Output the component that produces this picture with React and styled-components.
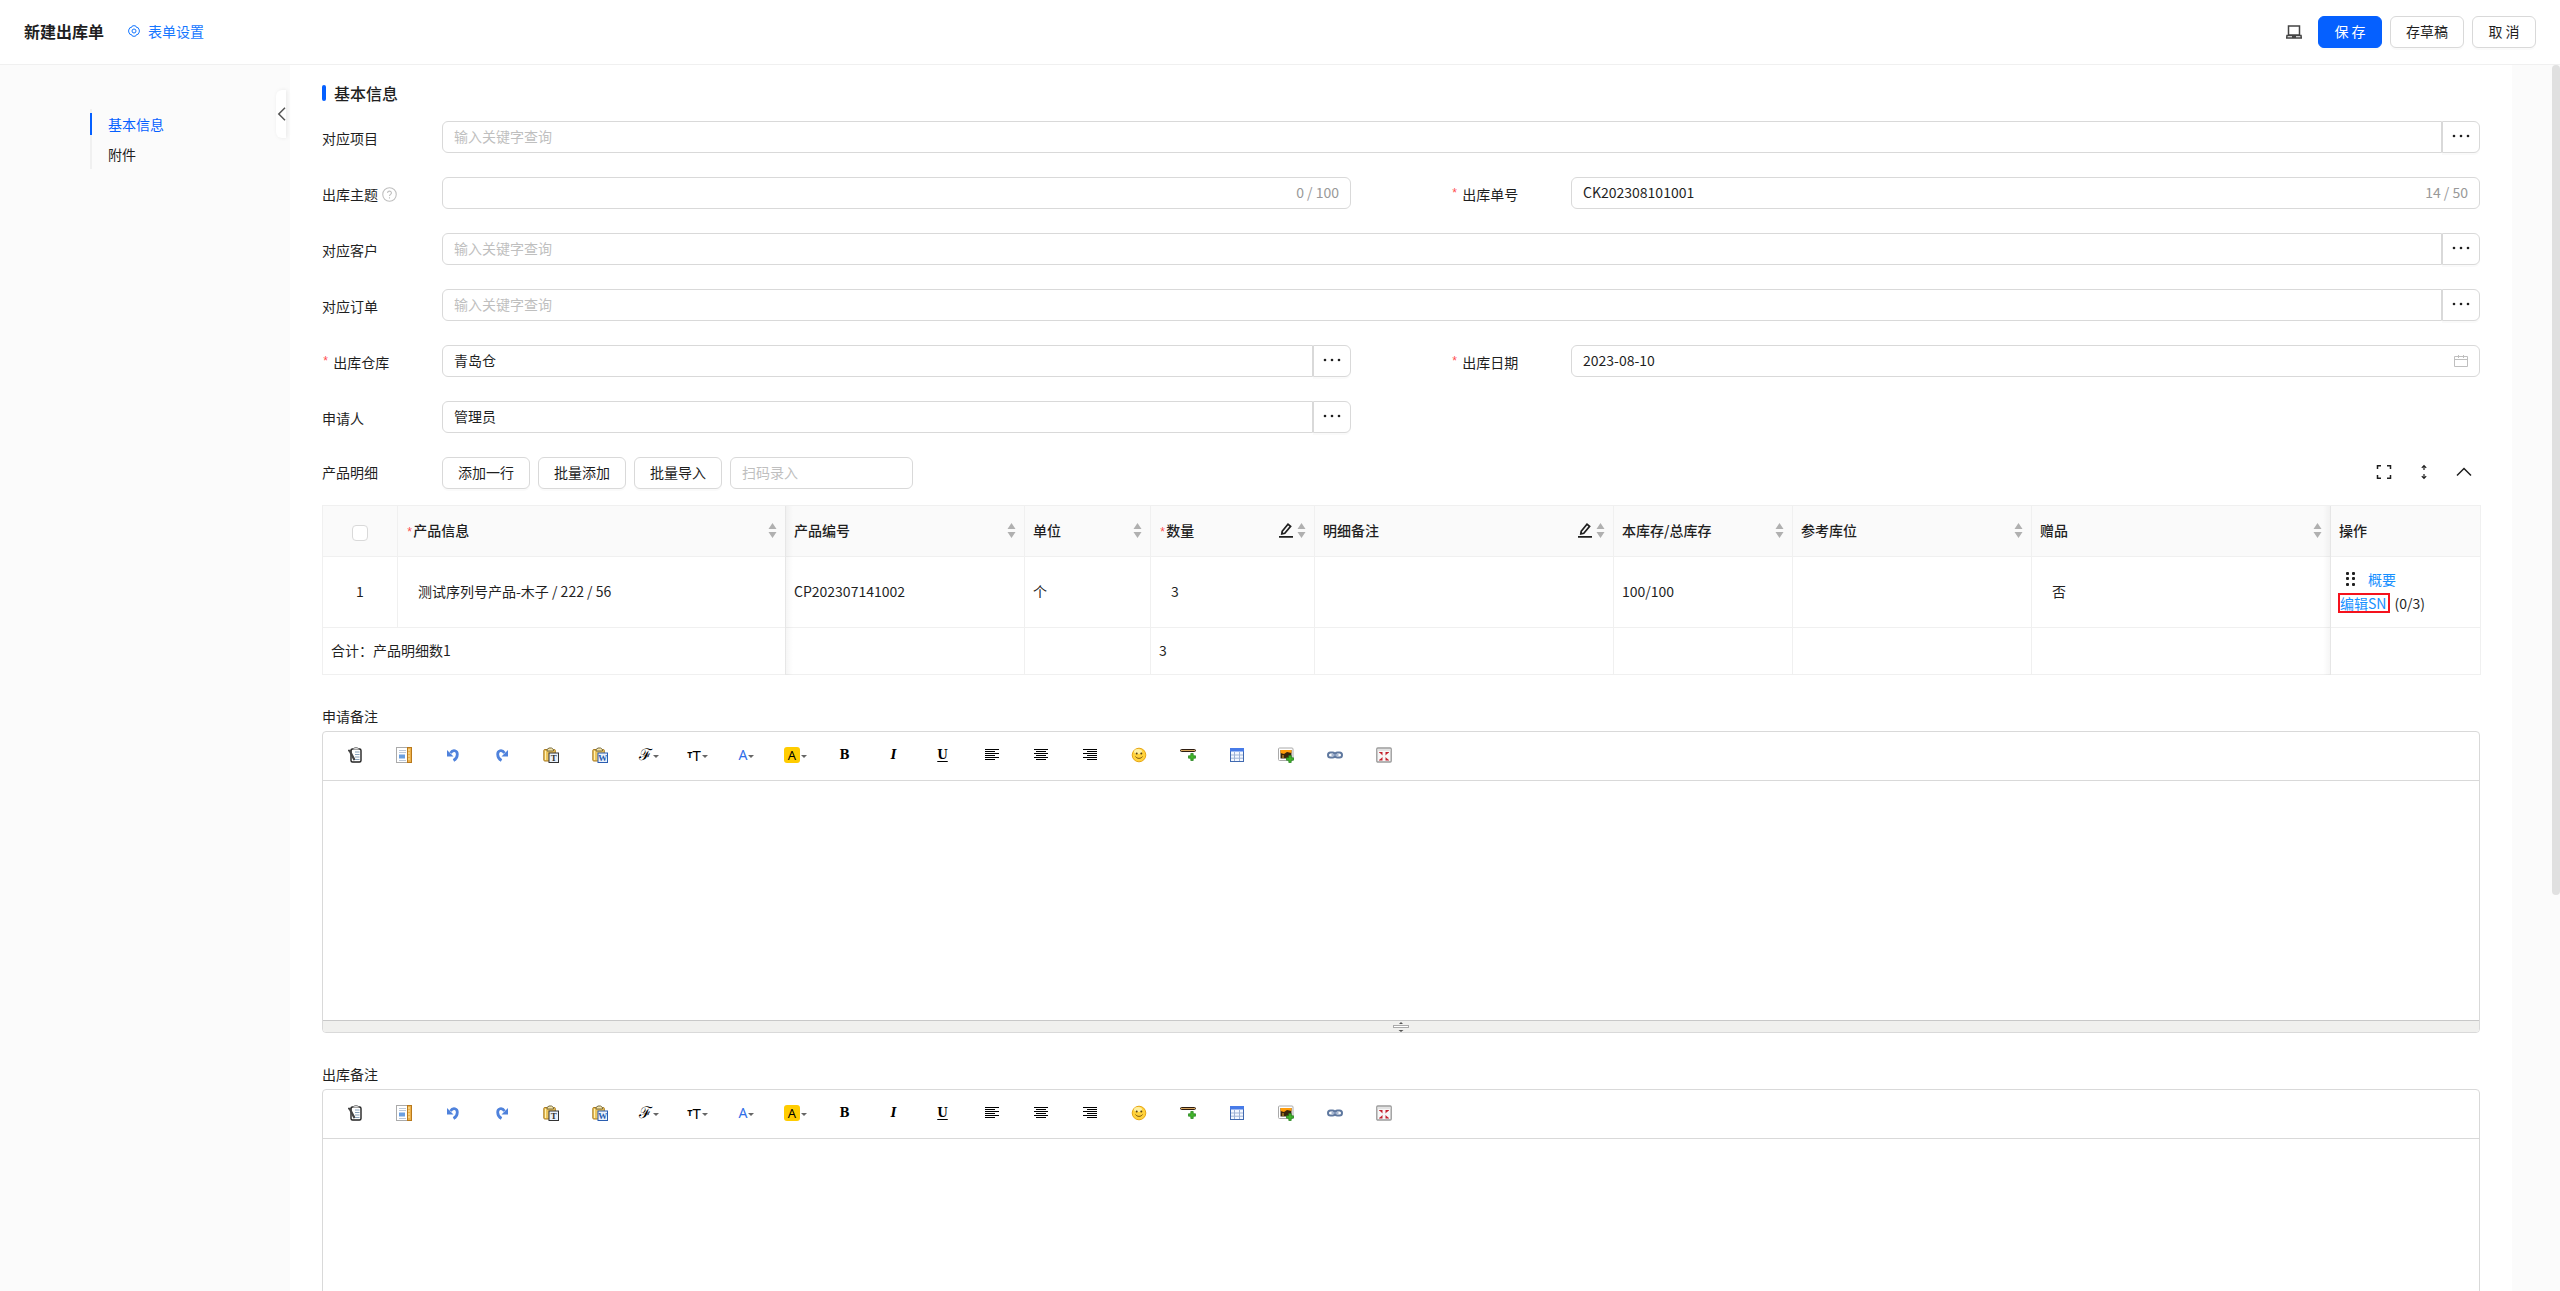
import React, { useState } from "react";
import styled, { createGlobalStyle, css } from "styled-components";

const Global = createGlobalStyle`
  *, *::before, *::after { box-sizing: border-box; }
  body { margin: 0; background: #fff; }
  body, button, input, textarea {
    font-family: "Noto Sans CJK SC", "Noto Sans", sans-serif;
    font-size: 14px;
    color: #1f1f1f;
  }
  a { text-decoration: none; }
`;

const Page = styled.div`
  display: flex;
  flex-direction: column;
  height: 100vh;
  overflow: hidden;
`;

/* ---------- header ---------- */
const Header = styled.header`
  flex: none;
  display: flex;
  align-items: center;
  justify-content: space-between;
  height: 65px;
  padding: 0 24px 2px;
  border-bottom: 1px solid #f0f0f0;
  background: #fff;
`;
const HeaderGroup = styled.div`
  display: flex;
  align-items: center;
  gap: ${(p) => p.$gap}px;
`;
const HeaderActions = styled(HeaderGroup)`
  padding-top: 2px;
`;
const PageTitle = styled.h1`
  margin: 0;
  font-size: 16px;
  line-height: 24px;
  font-weight: 700;
`;
const SettingsLink = styled.a`
  display: flex;
  align-items: center;
  gap: 8px;
  line-height: 22px;
  color: #1677ff;
`;
const IconButton = styled.button`
  display: flex;
  align-items: center;
  justify-content: center;
  padding: 0;
  width: 16px;
  height: 16px;
  border: 0;
  background: none;
  cursor: pointer;
`;
const Button = styled.button`
  height: 32px;
  min-width: ${(p) => p.$width}px;
  padding: 0 10px 2px;
  line-height: 22px;
  border: 1px solid ${(p) => (p.$primary ? "#0560ff" : "#d9d9d9")};
  border-radius: 6px;
  background: ${(p) => (p.$primary ? "#0560ff" : "#fff")};
  color: ${(p) => (p.$primary ? "#fff" : "#1f1f1f")};
  box-shadow: 0 2px 0 rgba(0, 0, 0, 0.02);
  white-space: nowrap;
  cursor: pointer;
`;

/* ---------- shell ---------- */
const Body = styled.div`
  flex: 1;
  min-height: 0;
  display: flex;
  background: #fbfbfb;
`;
const Scroller = styled.div`
  flex: 1;
  min-width: 0;
  display: flex;
  align-items: stretch;
  overflow-y: auto;
  scrollbar-width: none;
`;
const ScrollTrack = styled.div`
  flex: none;
  width: 8px;
`;
const ScrollThumb = styled.div`
  width: 8px;
  border-radius: 4px;
  background: #e0e0e0;
`;
const Sidebar = styled.aside`
  position: relative;
  flex: none;
  width: 290px;
  padding: 44px 0 0 90px;
`;
const Anchors = styled.nav`
  display: flex;
  flex-direction: column;
  padding: 4px 0;
  border-left: 2px solid #f0f0f0;
  gap: 8px;
`;
const Anchor = styled.a`
  margin-left: -2px;
  padding-left: 16px;
  line-height: 22px;
  border-left: 2px solid ${(p) => (p.$active ? "#0560ff" : "transparent")};
  color: ${(p) => (p.$active ? "#0560ff" : "#1f1f1f")};
`;
const CollapseTab = styled.button`
  position: absolute;
  top: 25px;
  right: 4px;
  display: flex;
  align-items: center;
  justify-content: center;
  width: 10px;
  height: 48px;
  padding: 0;
  border: 0;
  border-radius: 6px 0 0 6px;
  background: #fff;
  box-shadow: 1px 0 4px rgba(0, 0, 0, 0.08);
`;
const Main = styled.main`
  flex: 1;
  min-width: 0;
  min-height: 1811px;
  margin-right: 40px;
  padding: 0 32px;
  background: #fff;
`;

/* ---------- form ---------- */
const SectionTitle = styled.h2`
  display: flex;
  align-items: center;
  gap: 8px;
  height: 56px;
  margin: 0;
  font-size: 16px;
  font-weight: 500;
  &::before {
    content: "";
    width: 4px;
    height: 16px;
    border-radius: 2px;
    background: #0560ff;
  }
`;
const FormGrid = styled.div`
  display: grid;
  grid-template-columns: 1fr 1fr;
  grid-auto-rows: 32px;
  gap: 24px 100px;
`;
const FieldRow = styled.div`
  grid-column: ${(p) => (p.$full ? "1 / -1" : p.$first ? "1" : "auto")};
  display: flex;
  align-items: flex-start;
  min-width: 0;
`;
const FieldLabel = styled.label`
  flex: none;
  display: flex;
  align-items: center;
  gap: 4px;
  width: 120px;
  height: ${(p) => (p.$level ? 30 : 34)}px;
`;
const Star = styled.span`
  color: #ff4d4f;
  font-weight: 400;
  font-size: 12px;
  font-family: "Liberation Mono", monospace;
`;
const Control = styled.div`
  flex: 1;
  display: flex;
  min-width: 0;
`;
const InputBox = styled.div`
  flex: ${(p) => (p.$width ? "none" : 1)};
  ${(p) => p.$width && css`width: ${p.$width}px;`}
  display: flex;
  align-items: center;
  min-width: 0;
  height: 32px;
  padding: 0 11px;
  border: 1px solid #d9d9d9;
  border-radius: ${(p) => (p.$joined ? "6px 0 0 6px" : "6px")};
  background: #fff;
`;
const TextInput = styled.input`
  flex: 1;
  min-width: 0;
  height: 24px;
  padding: 0 0 2px;
  border: 0;
  outline: 0;
  background: transparent;
  &::placeholder { color: #bfbfbf; opacity: 1; }
`;
const Counter = styled.span`
  padding-bottom: 2px;
  color: #999;
  line-height: 22px;
`;
const MoreButton = styled.button`
  flex: none;
  display: flex;
  align-items: center;
  justify-content: center;
  width: 38px;
  height: 32px;
  padding: 0 0 2px;
  border: 1px solid #d9d9d9;
  border-radius: 0 6px 6px 0;
  background: #fff;
  box-shadow: 0 2px 0 rgba(0, 0, 0, 0.02);
`;
const DetailBar = styled.div`
  display: flex;
  align-items: flex-start;
  margin: 24px 0 16px;
`;
const DetailActions = styled.div`
  flex: 1;
  display: flex;
  gap: 8px;
`;
const DetailTools = styled.div`
  display: flex;
  align-items: center;
  gap: 24px;
  height: 30px;
  padding-right: 8px;
`;

/* ---------- table ---------- */
const Table = styled.table`
  width: 100%;
  table-layout: fixed;
  border-collapse: separate;
  border-spacing: 0;
  border-top: 1px solid #f0f0f0;
  text-align: left;
`;
const pinned = css`
  position: relative;
  &::after {
    content: "";
    position: absolute;
    top: 0;
    bottom: -1px;
    width: 8px;
    ${(p) =>
      p.$pin === "left"
        ? "left: 100%; background: linear-gradient(90deg, rgba(0,0,0,.045), transparent);"
        : "right: 100%; background: linear-gradient(270deg, rgba(0,0,0,.045), transparent);"}
  }
`;
const cell = css`
  padding: 0 8px 2px ${(p) => (p.$indent ? 20 : 8)}px;
  border-right: 1px solid #f0f0f0;
  border-bottom: 1px solid #f0f0f0;
  text-align: ${(p) => (p.$center ? "center" : "left")};
  vertical-align: middle;
  &:first-child { border-left: 1px solid #f0f0f0; }
  ${(p) => p.$pin && pinned}
`;
const Th = styled.th`
  ${cell}
  height: 51px;
  background: #fafafa;
  font-weight: 500;
`;
const Td = styled.td`
  ${cell}
  height: ${(p) => (p.$summary ? 47 : 71)}px;
  line-height: 24px;
`;
const HeadInner = styled.div`
  display: flex;
  align-items: center;
  gap: 4px;
`;
const HeadText = styled.span`
  flex: 1;
  white-space: nowrap;
`;
const Checkbox = styled.input`
  appearance: none;
  display: inline-block;
  width: 16px;
  height: 16px;
  margin: 4px 0 0;
  border: 1px solid #d9d9d9;
  border-radius: 4px;
  background: #fff;
  vertical-align: middle;
`;
const OpsLine = styled.div`
  display: flex;
  align-items: center;
  height: 24px;
  white-space: nowrap;
`;
const Handle = styled.span`
  display: flex;
  padding: 0 12px 0 6px;
`;
const RowLink = styled.a`
  color: #1890ff;
`;
const MarkedLink = styled(RowLink)`
  margin: 0 4px 0 -1px;
  padding-right: 2px;
  line-height: 16px;
  border: 2px solid #f5121d;
`;

/* ---------- rich text editor ---------- */
const EditorLabel = styled.label`
  display: block;
  margin: 28px 0 2px;
  line-height: 26px;
`;
const EditorFrame = styled.div`
  display: flex;
  flex-direction: column;
  border: 1px solid #d9d9d9;
  border-radius: 4px;
  overflow: hidden;
`;
const Toolbar = styled.div`
  display: flex;
  align-items: center;
  height: 49px;
  padding: 0 0 2px 7px;
  border-bottom: 1px solid #d9d9d9;
`;
const ToolButton = styled.button`
  flex: none;
  display: flex;
  align-items: center;
  justify-content: center;
  width: 49px;
  height: 32px;
  padding: 0;
  border: 0;
  background: none;
`;
const EditorArea = styled.textarea`
  display: block;
  width: 100%;
  height: 239px;
  padding: 8px;
  border: 0;
  outline: 0;
  resize: none;
  background: #fff;
`;
const StatusBar = styled.div`
  display: flex;
  align-items: center;
  justify-content: center;
  height: 12px;
  border-top: 1px solid #c8c8c8;
  background: #f0f0ee;
`;
const Glyph = styled.span`
  font-family: ${(p) => (p.$sans ? '"Noto Sans", sans-serif' : '"DejaVu Serif", "Liberation Serif", serif')};
  font-size: ${(p) => p.$size || 12}px;
  font-weight: ${(p) => (p.$bold ? 700 : 400)};
  font-style: ${(p) => (p.$italic ? "italic" : "normal")};
  text-decoration: ${(p) => (p.$underline ? "underline" : "none")};
  text-underline-offset: 2px;
  line-height: 16px;
  color: ${(p) => p.$color || "#000"};
`;
const Swatch = styled.span`
  display: flex;
  align-items: center;
  justify-content: center;
  width: 16px;
  height: 16px;
  border-radius: 3px;
  background: #ffcc00;
`;
const Caret = styled.span`
  margin: 2px 0 0 1px;
  border: 3px solid transparent;
  border-top-color: #666;
  border-bottom: 0;
`;

/* ---------- icons ---------- */
const Svg = ({ w = 16, h = 16, box, children, ...rest }) => (
  <svg width={w} height={h} viewBox={box || `0 0 ${w} ${h}`} fill="none" aria-hidden="true" {...rest}>
    {children}
  </svg>
);
const GearIcon = () => (
  <Svg w={12} h={12} stroke="#1677ff">
    <path d="M4 1.2 6 .6l2 .6.6 1.3 1.5.2L11.3 5v2l-1.2 2.3-1.5.2L8 10.8l-2 .6-2-.6-.6-1.3-1.5-.2L.7 7V5l1.2-2.3 1.5-.2z" />
    <circle cx="6" cy="6" r="2" />
  </Svg>
);
const LaptopIcon = () => (
  <Svg stroke="#444" strokeWidth="1.5">
    <path d="M2.5 2h11v9h-11zM1 11.5h14L15.3 14H.7zM6 13h4" />
  </Svg>
);
const ChevronLeft = () => (
  <Svg w={9} h={14} stroke="#555" strokeWidth="1.5"><path d="M8 .8 1.800 7 8 13.200" /></Svg>
);
const HelpIcon = () => (
  <Svg w={15} h={15} box="0 0 14 14" stroke="#bfbfbf">
    <circle cx="7" cy="7" r="6.3" />
    <path d="M5.2 5.600C5.2 3.300 8.800 3.300 8.800 5.500 8.800 6.900 7 6.800 7 8.400M7 9.500v1.200" />
  </Svg>
);
const MoreIcon = () => (
  <Svg w={18} h={4}>
    {[2, 9, 16].map((x) => <circle key={x} cx={x} cy="2" r="1.3" fill="#1f1f1f" />)}
  </Svg>
);
const CalendarIcon = () => (
  <Svg w={14} h={14} stroke="#bfbfbf"><path d="M.5 2.500h13v10H.5zM.5 5.500h13M4.500 1v3M9.500 1v3" /></Svg>
);
const ExpandIcon = () => (
  <Svg stroke="#1f1f1f" strokeWidth="1.5"><path d="M1.500 5V1.800H5M11 1.800h3.500V5M14.500 11v3.200H11M5 14.200H1.500V11" /></Svg>
);
const HeightIcon = () => (
  <Svg stroke="#1f1f1f" strokeWidth="1.2"><path d="M8 1.500v4.500M8 10v4.500M5.800 3.800 8 1.500l2.200 2.300M5.800 12.200 8 14.500l2.200-2.300" /></Svg>
);
const ChevronUp = () => (
  <Svg stroke="#1f1f1f" strokeWidth="1.5"><path d="M1 11.500 8 4.500l7 7" /></Svg>
);
const SortIcon = () => (
  <Svg w={9} h={15}><path d="M4.500 0 8.500 6h-8zM4.500 15l4-6h-8z" fill="#b0b0b0" /></Svg>
);
const EditIcon = () => (
  <Svg w={14} h={15} stroke="#1f1f1f" strokeWidth="1.7"><path d="M0 13.800h14M3.200 8.200 9 1.300l2.600 2.100L5.800 10.300l-3 .6z" /></Svg>
);
const DragIcon = () => (
  <Svg w={11} h={14}>
    {[1, 7].map((x) => [0, 5, 11].map((y) => <rect key={`${x}-${y}`} x={x} y={y} width="3" height="3" rx="1" fill="#1f1f1f" />))}
  </Svg>
);
const SourceIcon = () => (
  <Svg>
    <rect x="4" y="2" width="10" height="13" rx="1.500" fill="#fff" stroke="#222" strokeWidth="1.400" />
    <path d="M6 2.500C6 0 12 0 12 2.500" stroke="#777" fill="#eee" />
    <path d="M8 5h4.500M8 7.500h4.500M8 10h4.500M8 12.500h4.500" stroke="#8aa4bd" />
    <path d="M1 3h2.500L8 11.500V13L6.500 13.500z" fill="#444" />
    <path d="M1 3.500h4" stroke="#444" strokeWidth="1.500" />
  </Svg>
);
const TemplateIcon = () => (
  <Svg>
    <rect x=".5" y=".5" width="11" height="15" fill="#fff" stroke="#555" strokeDasharray="1 1" />
    <path d="M3 3.500h7M3 5.500h7M3 13.500h7" stroke="#bcc8d8" />
    <rect x="3" y="7.500" width="6" height="4" fill="#6a9fe0" />
    <rect x="11.500" y=".5" width="4" height="15" fill="#edb04a" stroke="#b8791c" />
    <path d="M12 3h2M12 6h2M12 9h2M12 12h2" stroke="#fff0b0" />
  </Svg>
);
const UndoIcon = ({ flip }) => (
  <Svg w={12} h={14}>
    <g transform={flip ? "translate(12 0) scale(-1 1)" : undefined}>
      <path d="M3.500 5C6 1 10.500 2.500 10.300 6.500 10.200 9.500 8.500 11.500 6.500 12.600" stroke="#4f82dc" strokeWidth="2.800" />
      <path d="M0 2v6.500h6.500z" fill="#4f82dc" />
    </g>
  </Svg>
);
const PasteIcon = ({ letter, color }) => (
  <Svg>
    <rect x=".8" y="2.500" width="11.500" height="11.500" rx="1" fill="#edc55c" stroke="#a9791f" />
    <path d="M2.500 4v9" stroke="#fff2b5" />
    <path d="M4 4V2.500L6 1h2.500l2 1.500V4z" fill="#f5e6ab" stroke="#75693d" />
    <rect x="6" y="6" width="9.500" height="9.500" fill="#e9f1fb" stroke={color} />
    <text x="10.800" y="14" textAnchor="middle" fontFamily="Liberation Serif, serif" fontWeight="700" fontSize="9" fill={color}>{letter}</text>
  </Svg>
);
const AlignIcon = ({ mode }) => {
  const widths = [14, 10, 14, 10, 14, 10];
  return (
    <Svg w={14} h={12}>
      {widths.map((w, i) => (
        <rect key={i} x={mode === "left" ? 0 : mode === "right" ? 14 - w : (14 - w) / 2} y={i * 2} width={w} height="1" fill="#000" />
      ))}
    </Svg>
  );
};
const SmileIcon = () => (
  <Svg>
    <circle cx="8" cy="8" r="6.800" fill="#ffd23c" stroke="#e6a514" />
    <ellipse cx="7" cy="4.500" rx="4" ry="2.500" fill="#fff0a0" />
    <circle cx="5.700" cy="6.500" r="1" fill="#5b4310" /><circle cx="10.300" cy="6.500" r="1" fill="#5b4310" />
    <path d="M4.500 9.500c1.500 2.500 5.500 2.500 7 0" stroke="#805a10" />
  </Svg>
);
const Plus = ({ x, y }) => (
  <path transform={`translate(${x} ${y})`} d="M2.300 0h2.400v2.300H7v2.400H4.700V7H2.300V4.700H0V2.300h2.300z" fill="#43b52c" stroke="#1c7d16" strokeWidth=".7" />
);
const RuleIcon = () => (
  <Svg><rect x=".5" y="2.500" width="15" height="2" rx="1" fill="#d9a860" stroke="#2d1c10" /><Plus x={8.5} y={6.5} /></Svg>
);
const GridIcon = () => (
  <Svg>
    <rect x="1.500" y="1.500" width="13" height="13" fill="#f4f8ff" stroke="#4069b0" />
    <path d="M1 1h14v3.500H1z" fill="#477be8" />
    <path d="M2 8h12M2 11.200h12M5.500 5v9M10.500 5v9" stroke="#9fb3d6" />
  </Svg>
);
const ImageIcon = () => (
  <Svg>
    <rect x=".5" y="1" width="14.500" height="12.500" rx="1" fill="#fff" stroke="#aaa" />
    <rect x="2.500" y="3" width="11" height="8.500" fill="#38250c" />
    <path d="M2.500 3h11v3L9 5 6 7 2.500 6z" fill="#ff9d0a" />
    <path d="M4 11V8h2v3z" fill="#8f6820" /><Plus x={8.5} y={8.5} />
  </Svg>
);
const LinkIcon = () => (
  <Svg>
    <rect x="1" y="5.500" width="7" height="5" rx="2.500" stroke="#5f789f" strokeWidth="2" />
    <rect x="8" y="5.500" width="7" height="5" rx="2.500" stroke="#5f789f" strokeWidth="2" />
    <path d="M4.500 8h7" stroke="#8ea2c3" strokeWidth="1.500" />
  </Svg>
);
const FullIcon = () => (
  <Svg>
    <rect x=".8" y="1" width="14.400" height="14" rx="1" fill="#f7f7f7" stroke="#9c9c9c" strokeWidth="1.400" />
    <path d="M1.500 3h13" stroke="#ddd" strokeWidth="1.500" />
    <path d="M6.500 5v3.500L5.300 7.300 4 6 3 5.500V5zM9.500 5v3.500l1.200-1.200L13 5.500V5zM6.500 13.500V10L5.300 11.200 3 13v.5zM9.500 13.500V10l1.200 1.200L13 13v.5z" fill="#c3202c" />
  </Svg>
);
const GripIcon = () => (
  <Svg w={16} h={10}>
    <path d="M8 0l2 2H6zM8 10l2.500-2h-5z" fill="#555" />
    <rect x=".5" y="3.500" width="15" height="2" fill="#fff" stroke="#aaa" />
  </Svg>
);

/* ---------- composed parts ---------- */
function Field({ id, label, required, help, full, first, value, placeholder, counter, more, calendar }) {
  return (
    <FieldRow $full={full} $first={first}>
      <FieldLabel htmlFor={id}>
        {required && <Star>*</Star>}
        <span>{label}</span>
        {help && <HelpIcon />}
      </FieldLabel>
      <Control>
        <InputBox $joined={more}>
          <TextInput id={id} type="text" defaultValue={value} placeholder={placeholder} />
          {counter && <Counter>{counter}</Counter>}
          {calendar && <CalendarIcon />}
        </InputBox>
        {more && <MoreButton type="button" aria-label={`选择${label}`}><MoreIcon /></MoreButton>}
      </Control>
    </FieldRow>
  );
}

const HINT = "输入关键字查询";
const FIELDS = [
  { id: "project", label: "对应项目", full: true, more: true, placeholder: HINT },
  { id: "subject", label: "出库主题", help: true, counter: "0 / 100" },
  { id: "number", label: "出库单号", required: true, value: "CK202308101001", counter: "14 / 50" },
  { id: "customer", label: "对应客户", full: true, more: true, placeholder: HINT },
  { id: "order", label: "对应订单", full: true, more: true, placeholder: HINT },
  { id: "warehouse", label: "出库仓库", required: true, more: true, value: "青岛仓" },
  { id: "date", label: "出库日期", required: true, calendar: true, value: "2023-08-10" },
  { id: "applicant", label: "申请人", first: true, more: true, value: "管理员" },
];

const COLUMNS = [
  { title: "产品信息", width: 388, required: true, pin: "left" },
  { title: "产品编号", width: 239 },
  { title: "单位", width: 126 },
  { title: "数量", width: 164, required: true, edit: true },
  { title: "明细备注", width: 299, edit: true },
  { title: "本库存/总库存", width: 179 },
  { title: "参考库位", width: 239 },
  { title: "赠品", width: 299 },
];

function ProductTable() {
  return (
    <Table>
      <colgroup>
        <col width={76} />
        {COLUMNS.map((c) => <col key={c.title} width={c.width} />)}
        <col width={150} />
      </colgroup>
      <thead>
        <tr>
          <Th $center><Checkbox type="checkbox" aria-label="全选" /></Th>
          {COLUMNS.map((c) => (
            <Th key={c.title} $pin={c.pin}>
              <HeadInner>
                <HeadText>{c.required && <Star>*</Star>}{c.title}</HeadText>
                {c.edit && <EditIcon />}
                <SortIcon />
              </HeadInner>
            </Th>
          ))}
          <Th $pin="right">操作</Th>
        </tr>
      </thead>
      <tbody>
        <tr>
          <Td $center>1</Td>
          <Td $indent $pin="left">测试序列号产品-木子 / 222 / 56</Td>
          <Td>CP202307141002</Td>
          <Td>个</Td>
          <Td $indent>3</Td>
          <Td />
          <Td>100/100</Td>
          <Td />
          <Td $indent>否</Td>
          <Td $pin="right">
            <OpsLine><Handle><DragIcon /></Handle><RowLink href="#summary">概要</RowLink></OpsLine>
            <OpsLine><MarkedLink href="#sn">编辑SN</MarkedLink><span>(0/3)</span></OpsLine>
          </Td>
        </tr>
      </tbody>
      <tfoot>
        <tr>
          <Td $summary $pin="left" colSpan={2}>合计：产品明细数1</Td>
          <Td $summary />
          <Td $summary />
          <Td $summary>3</Td>
          <Td $summary />
          <Td $summary />
          <Td $summary />
          <Td $summary />
          <Td $summary $pin="right" />
        </tr>
      </tfoot>
    </Table>
  );
}

const TOOLS = [
  ["源代码", <SourceIcon />],
  ["模板", <TemplateIcon />],
  ["撤销", <UndoIcon />],
  ["重做", <UndoIcon flip />],
  ["粘贴文本", <PasteIcon letter="T" color="#333" />],
  ["粘贴Word", <PasteIcon letter="W" color="#2a5db0" />],
  ["字体", <><Glyph $size={16}>ℱ</Glyph><Caret /></>],
  ["字号", <><Glyph $sans $bold $size={9}>T</Glyph><Glyph $sans $size={15}>T</Glyph><Caret /></>],
  ["文字颜色", <><Glyph $sans $size={14} $color="#2f6fe8">A</Glyph><Caret /></>],
  ["背景颜色", <><Swatch><Glyph $sans $size={13}>A</Glyph></Swatch><Caret /></>],
  ["粗体", <Glyph $bold>B</Glyph>],
  ["斜体", <Glyph $bold $italic>I</Glyph>],
  ["下划线", <Glyph $bold $underline>U</Glyph>],
  ["左对齐", <AlignIcon mode="left" />],
  ["居中", <AlignIcon mode="center" />],
  ["右对齐", <AlignIcon mode="right" />],
  ["表情", <SmileIcon />],
  ["分隔线", <RuleIcon />],
  ["表格", <GridIcon />],
  ["图片", <ImageIcon />],
  ["链接", <LinkIcon />],
  ["全屏", <FullIcon />],
];

function Editor({ id, label }) {
  return (
    <>
      <EditorLabel htmlFor={id}>{label}</EditorLabel>
      <EditorFrame>
        <Toolbar>
          {TOOLS.map(([name, icon]) => (
            <ToolButton key={name} type="button" aria-label={name}>{icon}</ToolButton>
          ))}
        </Toolbar>
        <EditorArea id={id} />
        <StatusBar><GripIcon /></StatusBar>
      </EditorFrame>
    </>
  );
}

function ScrollPane({ children }) {
  const [thumb, setThumb] = useState({ top: 0, size: 67.7 });
  const measure = (e) => {
    const { scrollTop, scrollHeight, clientHeight } = e.currentTarget;
    setThumb({ top: (scrollTop / scrollHeight) * clientHeight, size: (clientHeight / scrollHeight) * 100 });
  };
  return (
    <Body>
      <Scroller onScroll={measure}>{children}</Scroller>
      <ScrollTrack aria-hidden="true">
        <ScrollThumb style={{ marginTop: thumb.top, height: `${thumb.size}%` }} />
      </ScrollTrack>
    </Body>
  );
}

export default function App() {
  return (
    <Page>
      <Global />
      <Header>
        <HeaderGroup $gap={24}>
          <PageTitle>新建出库单</PageTitle>
          <SettingsLink href="#settings"><GearIcon />表单设置</SettingsLink>
        </HeaderGroup>
        <HeaderActions $gap={16}>
          <IconButton type="button" aria-label="预览"><LaptopIcon /></IconButton>
          <HeaderGroup $gap={8}>
            <Button type="button" $primary $width={64}>保 存</Button>
            <Button type="button" $width={74}>存草稿</Button>
            <Button type="button" $width={64}>取 消</Button>
          </HeaderGroup>
        </HeaderActions>
      </Header>
      <ScrollPane>
        <Sidebar>
          <Anchors>
            <Anchor href="#basic" $active>基本信息</Anchor>
            <Anchor href="#files">附件</Anchor>
          </Anchors>
          <CollapseTab type="button" aria-label="收起"><ChevronLeft /></CollapseTab>
        </Sidebar>
        <Main>
          <SectionTitle id="basic">基本信息</SectionTitle>
          <FormGrid>
            {FIELDS.map((f) => <Field key={f.id} {...f} />)}
          </FormGrid>
          <DetailBar>
            <FieldLabel htmlFor="scan" $level>产品明细</FieldLabel>
            <DetailActions>
              <Button type="button" $width={88}>添加一行</Button>
              <Button type="button" $width={88}>批量添加</Button>
              <Button type="button" $width={88}>批量导入</Button>
              <InputBox $width={183}><TextInput id="scan" type="text" placeholder="扫码录入" /></InputBox>
            </DetailActions>
            <DetailTools>
              <IconButton type="button" aria-label="全屏"><ExpandIcon /></IconButton>
              <IconButton type="button" aria-label="行高"><HeightIcon /></IconButton>
              <IconButton type="button" aria-label="折叠"><ChevronUp /></IconButton>
            </DetailTools>
          </DetailBar>
          <ProductTable />
          <Editor id="apply-note" label="申请备注" />
          <Editor id="out-note" label="出库备注" />
        </Main>
      </ScrollPane>
    </Page>
  );
}
